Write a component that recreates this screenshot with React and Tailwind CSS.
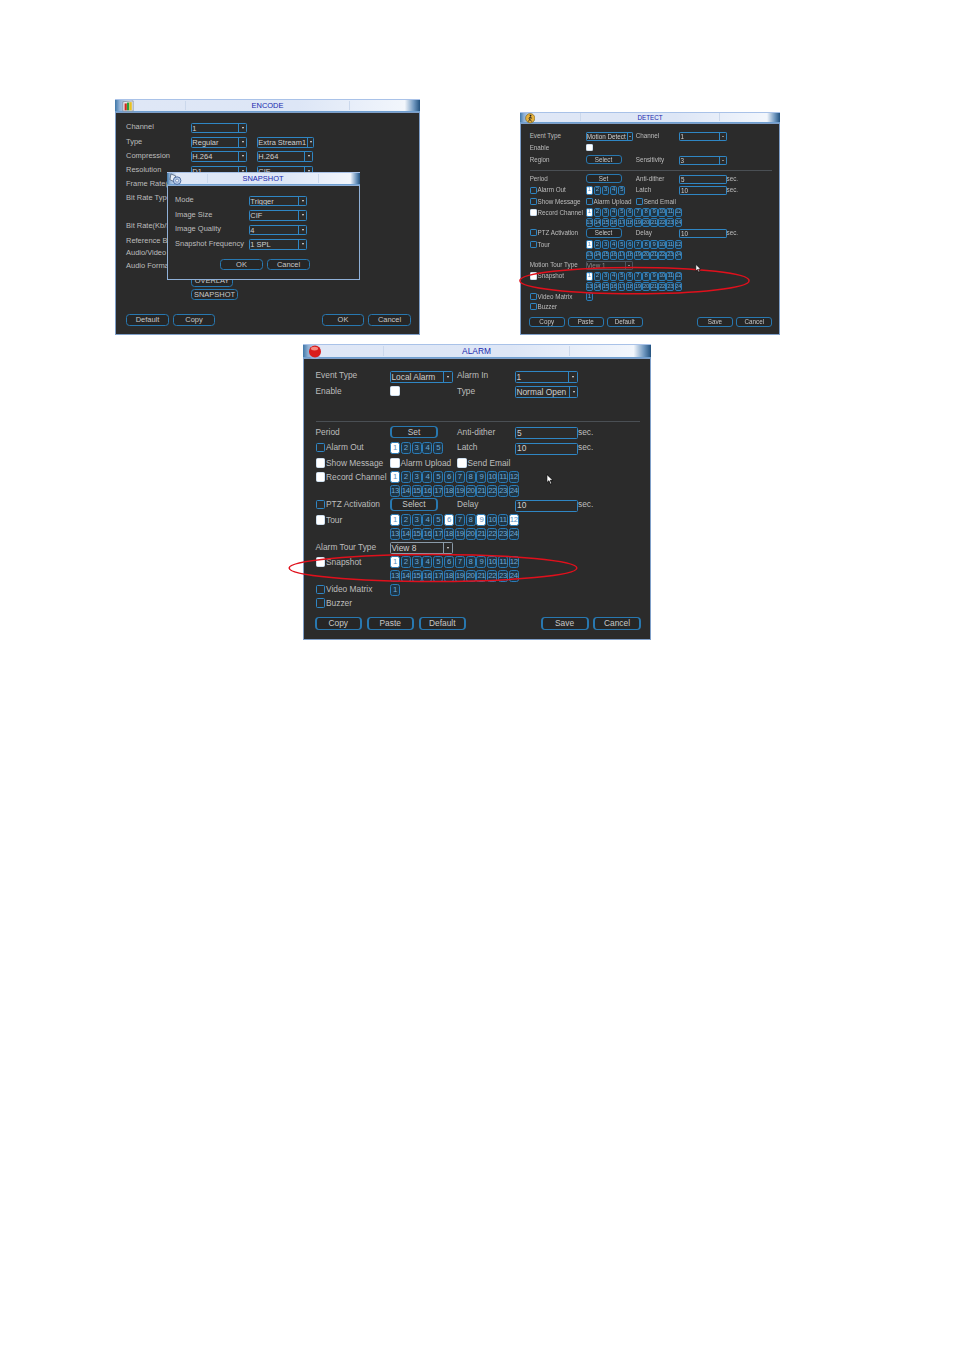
import React from "react";

const range = (a, b) => Array.from({ length: b - a + 1 }, (_, i) => a + i);

function Select({ value, w, arrow = "w-[0.9em]", dim = false, pale = false }) {
  const border = dim ? "border-[#4b5560]" : pale ? "border-[#8a9aa8]" : "border-[#2f86c4]";
  const text = dim ? "text-[#8a8a8a]" : "text-[#cfcfcf]";
  return (
    <div className={`mt-[0.2em] flex h-[1.2em] shrink-0 items-stretch rounded-[0.15em] border-[0.13em] ${border} ${w}`}>
      <span className={`flex-1 overflow-hidden whitespace-nowrap pl-[0.05em] text-[0.84em] leading-[1.25] ${text}`}>{value}</span>
      <span className={`flex shrink-0 items-center justify-center border-l-[0.1em] ${border} ${arrow}`}>
        <span className="h-0 w-0 border-x-[0.18em] border-t-[0.25em] border-x-transparent border-t-[#e8e8e8]" />
      </span>
    </div>
  );
}

function Input({ value, w }) {
  return (
    <div className={`mt-[0.2em] flex h-[1.2em] shrink-0 items-center rounded-[0.15em] border-[0.13em] border-[#2f86c4] pl-[0.1em] ${w}`}>
      <span className="text-[0.84em] text-[#cfcfcf]">{value}</span>
    </div>
  );
}

function Button({ label, w }) {
  return (
    <div className={`flex h-[1.25em] shrink-0 items-center justify-center rounded-[0.4em] border-[0.14em] border-x-[0.2em] border-[#2878b0] bg-[#262626] ${w}`}>
      <span className="text-[0.84em] text-[#c8c8c8]">{label}</span>
    </div>
  );
}

function Check({ on }) {
  return (
    <span
      className={`mr-[0.1em] h-[0.95em] w-[0.95em] shrink-0 rounded-[0.15em] border-[0.1em] ${on ? "border-[#cfe0f0] bg-white" : "border-[#2f86c4] bg-[#2b2b2b]"}`}
    />
  );
}

function Label({ children }) {
  return <span className="shrink-0 whitespace-nowrap text-[0.84em] text-[#bdbdbd]">{children}</span>;
}

function CheckLabel({ on, label }) {
  return (
    <div className="flex shrink-0 items-center">
      <Check on={on} />
      <Label>{label}</Label>
    </div>
  );
}

function Nums({ from, to, on = [] }) {
  return (
    <div className="flex gap-[0.08em]">
      {range(from, to).map((n) => (
        <span
          key={n}
          className={`flex h-[1.2em] w-[1em] items-center justify-center overflow-hidden rounded-[0.25em] border-[0.13em] border-[#2a7cb8] ${on.includes(n) ? "bg-white" : "bg-[#1f3544]"}`}
        >
          <span className={`text-[0.78em] leading-none tracking-[-0.05em] ${on.includes(n) ? "text-[#5b93c4]" : "text-[#6ea6d2]"}`}>{n}</span>
        </span>
      ))}
    </div>
  );
}

function TitleBar({ title, icon, h, panel }) {
  return (
    <div className={`relative flex items-center border-b border-t border-b-[#6f9fd0] border-t-[#a9c2e8] bg-[linear-gradient(90deg,#3f77a8_0%,#8fb0d4_1.5%,#dfe7f6_5%,#dde6f6_60%,#f2f6fc_95%,#6f97bf_98%,#23527f_100%)] ${h}`}>
      <div className={`flex h-[90%] items-center justify-center border-x border-[#cbd8ec] ${panel}`}>
        <span className="text-[0.84em] text-[#1a28ad]">{title}</span>
      </div>
      {icon}
    </div>
  );
}

function Ball() {
  return (
    <svg viewBox="0 0 14 14" className="absolute left-[0.5em] top-0 h-[1.4em] w-[1.4em]">
      <ellipse cx="7" cy="12" rx="4.5" ry="2" fill="#8fb0d8" />
      <circle cx="7" cy="6.4" r="6" fill="#d81c1c" />
      <ellipse cx="6.5" cy="3.6" rx="3.6" ry="1.9" fill="#f58a80" />
    </svg>
  );
}

function Walker() {
  return (
    <svg viewBox="0 0 14 14" className="absolute left-[0.6em] top-[0.05em] h-[1.4em] w-[1.4em]">
      <circle cx="7" cy="7" r="6.2" fill="#e8b23c" stroke="#6d5a20" strokeWidth="0.8" />
      <circle cx="7.4" cy="3.4" r="1.2" fill="#222" />
      <path d="M7.2 5 L6.4 8.2 L4.6 11.4 M6.4 8.2 L8.8 11.4 M7 5.6 L9.4 7.2 M7 5.6 L4.8 7.2" stroke="#222" strokeWidth="1.1" fill="none" />
    </svg>
  );
}

function Bars() {
  return (
    <svg viewBox="0 0 14 14" className="absolute left-[0.75em] top-0 h-[1.35em] w-[1.35em]">
      <path d="M1 2 L13 1 L13 13 L1 13 Z" fill="#e4e9ef" stroke="#6b7785" strokeWidth="0.7" />
      <rect x="3" y="4" width="2.6" height="8" fill="#d02a1c" />
      <rect x="5.8" y="3" width="2.6" height="9" fill="#2aa03a" />
      <rect x="8.6" y="2.5" width="2.8" height="9.5" fill="#e8c020" />
    </svg>
  );
}

function Camera() {
  return (
    <svg viewBox="0 0 14 14" className="absolute left-[0.2em] top-0 h-[1.5em] w-[1.5em]">
      <path d="M2 1 L7 3 L5 9 L1 7 Z" fill="#e8eef6" stroke="#4a5a74" strokeWidth="0.8" />
      <circle cx="8.5" cy="8" r="4" fill="#b9cdea" stroke="#3e5f96" strokeWidth="0.9" />
      <circle cx="8.5" cy="8" r="1.6" fill="#f4f7fc" stroke="#3e5f96" strokeWidth="0.6" />
    </svg>
  );
}

function Cursor({ className }) {
  return (
    <svg viewBox="0 0 10 14" className={`absolute ${className}`}>
      <path d="M1 0.5 L1 11 L3.6 8.6 L5.4 13 L7.2 12.2 L5.4 8 L8.8 8 Z" fill="#fff" stroke="#000" strokeWidth="1" />
    </svg>
  );
}

function Ring({ className }) {
  return (
    <svg className={`pointer-events-none absolute ${className}`}>
      <ellipse cx="50%" cy="50%" rx="49.6%" ry="45%" fill="none" stroke="#e0101c" strokeWidth="1.5" />
    </svg>
  );
}

const Row = ({ mt = "", children }) => <div className={`flex h-[1.3em] items-center ${mt}`}>{children}</div>;
const Col1 = ({ children }) => <div className="flex w-[7.45em] shrink-0 items-center">{children}</div>;
const Col2 = ({ children }) => <div className="flex w-[6.7em] shrink-0 items-center">{children}</div>;
const Col3 = ({ children }) => <div className="flex w-[5.8em] shrink-0 items-center">{children}</div>;

function EventWindow({ size, title, icon, first, top, third, tour, tourType, alarmCheck, tourOn, ring, cursor }) {
  return (
    <div className={`relative flex shrink-0 flex-col ${size}`}>
      <TitleBar title={title} icon={icon} h="h-[1.4em]" panel="ml-[8em] w-[18.7em]" />
      <div className="flex-1 border border-[#7f9fc8] bg-[#2b2b2b] pl-[1.15em] pr-[1em] pt-[1em]">
        <Row>
          <Col1><Label>Event Type</Label></Col1>
          <Col2>{first.select}</Col2>
          <Col3><Label>{first.label}</Label></Col3>
          <Select value="1" w="w-[6.3em]" />
        </Row>
        <Row mt="mt-[0.25em]">
          <Col1><Label>Enable</Label></Col1>
          <Col2><Check on /></Col2>
          {top}
        </Row>
        <Row mt="mt-[0.3em]">{third}</Row>
        <div className="mb-[0.35em] mt-[0.75em] h-px bg-[#4a4f54]" />
        <Row>
          <Col1><Label>Period</Label></Col1>
          <Col2><Button label="Set" w="w-[4.8em]" /></Col2>
          <Col3><Label>Anti-dither</Label></Col3>
          <Input value="5" w="w-[6.3em]" />
          <Label>sec.</Label>
        </Row>
        <Row mt="mt-[0.25em]">
          <Col1><CheckLabel label="Alarm Out" /></Col1>
          <Col2><Nums from={1} to={5} on={[1]} /></Col2>
          <Col3><Label>Latch</Label></Col3>
          <Input value="10" w="w-[6.3em]" />
          <Label>sec.</Label>
        </Row>
        <Row mt="mt-[0.25em]">
          <Col1><CheckLabel on={alarmCheck} label="Show Message" /></Col1>
          <Col2><CheckLabel on={alarmCheck} label="Alarm Upload" /></Col2>
          <CheckLabel on={alarmCheck} label="Send Email" />
        </Row>
        <Row mt="mt-[0.1em]">
          <Col1><CheckLabel on label="Record Channel" /></Col1>
          <Nums from={1} to={12} on={[1]} />
        </Row>
        <Row mt="mt-[0.1em]">
          <Col1 />
          <Nums from={13} to={24} />
        </Row>
        <Row mt="mt-[0.05em]">
          <Col1><CheckLabel label="PTZ Activation" /></Col1>
          <Col2><Button label="Select" w="w-[4.8em]" /></Col2>
          <Col3><Label>Delay</Label></Col3>
          <Input value="10" w="w-[6.3em]" />
          <Label>sec.</Label>
        </Row>
        <Row mt="mt-[0.25em]">
          <Col1><CheckLabel on={tour} label="Tour" /></Col1>
          <Nums from={1} to={12} on={tourOn} />
        </Row>
        <Row mt="mt-[0.1em]">
          <Col1 />
          <Nums from={13} to={24} />
        </Row>
        <Row>
          <Col1><Label>{tourType.label}</Label></Col1>
          {tourType.select}
        </Row>
        <Row mt="mt-[0.2em]">
          <Col1><CheckLabel on label="Snapshot" /></Col1>
          <Nums from={1} to={12} on={[1]} />
        </Row>
        <Row mt="mt-[0.1em]">
          <Col1 />
          <Nums from={13} to={24} />
        </Row>
        <Row mt="mt-[0.05em]">
          <Col1><CheckLabel label="Video Matrix" /></Col1>
          <Nums from={1} to={1} />
        </Row>
        <Row mt="mt-[0.05em]">
          <Col1><CheckLabel label="Buzzer" /></Col1>
        </Row>
        <div className="-ml-[0.1em] -mr-[0.1em] mt-[0.75em] flex h-[1.3em] items-center gap-[0.45em]">
          <Button label="Copy" w="w-[4.75em]" />
          <Button label="Paste" w="w-[4.75em]" />
          <Button label="Default" w="w-[4.75em]" />
          <div className="flex-1" />
          <Button label="Save" w="w-[4.8em]" />
          <Button label="Cancel" w="w-[4.8em]" />
        </div>
      </div>
      <Ring className={ring} />
      <Cursor className={cursor} />
    </div>
  );
}

function Snapshot() {
  const rows = [
    ["Mode", "Trigger", ""],
    ["Image Size", "CIF", "mt-[2.5px]"],
    ["Image Quality", "4", "mt-[2.5px]"],
    ["Snapshot Frequency", "1 SPL", "mt-[2.5px]"],
  ];
  return (
    <div className="absolute left-[52px] top-[73px] flex h-[108px] w-[193px] flex-col">
      <TitleBar title="SNAPSHOT" icon={<Camera />} h="h-[13px]" panel="ml-[40px] w-[112px]" />
      <div className="flex-1 border border-[#8fb0d8] bg-[#2b2b2b] pl-[7px] pt-[8px]">
        {rows.map(([l, v, mt]) => (
          <div key={l} className={`flex h-[12px] items-center ${mt}`}>
            <div className="flex w-[74px] shrink-0"><Label>{l}</Label></div>
            <Select value={v} w="w-[58px]" />
          </div>
        ))}
        <div className="ml-[45px] mt-[9px] flex h-[12px] items-center gap-[4px]">
          <Button label="OK" w="w-[43px]" />
          <Button label="Cancel" w="w-[43px]" />
        </div>
      </div>
    </div>
  );
}

function EncodeRow({ label, mt = "", children }) {
  return (
    <div className={`flex h-[12px] items-center ${mt}`}>
      <div className="flex w-[65px] shrink-0"><Label>{label}</Label></div>
      {children}
    </div>
  );
}

function Encode() {
  const A = ({ v }) => <Select value={v} w="w-[56px]" />;
  const gap = <div className="w-[10px] shrink-0" />;
  return (
    <div className="relative flex h-[236px] w-[305px] shrink-0 flex-col text-[8.9px]">
      <TitleBar title="ENCODE" icon={<Bars />} h="h-[13px]" panel="ml-[70px] w-[165px]" />
      <div className="flex-1 border border-[#7f9fc8] bg-[#2b2b2b] pl-[10px] pr-[8px] pt-[8px]">
        <EncodeRow label="Channel"><A v="1" /></EncodeRow>
        <EncodeRow label="Type" mt="mt-[2.5px]"><A v="Regular" />{gap}<Select value="Extra Stream1" w="w-[57px]" arrow="w-[0.65em]" /></EncodeRow>
        <EncodeRow label="Compression" mt="mt-[2px]"><A v="H.264" />{gap}<A v="H.264" /></EncodeRow>
        <EncodeRow label="Resolution" mt="mt-[2.5px]"><A v="D1" />{gap}<A v="CIF" /></EncodeRow>
        <EncodeRow label="Frame Rate(FPS)" mt="mt-[2px]" />
        <EncodeRow label="Bit Rate Type" mt="mt-[2px]" />
        <EncodeRow label="Bit Rate(Kb/S)" mt="mt-[16px]" />
        <EncodeRow label="Reference Bit Rate" mt="mt-[2.5px]" />
        <EncodeRow label="Audio/Video" mt="mt-[0.5px]" />
        <EncodeRow label="Audio Format" mt="mt-[1px]" />
        <EncodeRow label="" mt="mt-[3px]"><Button label="OVERLAY" w="w-[42px]" /></EncodeRow>
        <EncodeRow label="" mt="mt-[1.5px]"><Button label="SNAPSHOT" w="w-[47px]" /></EncodeRow>
        <div className="mt-[13.5px] flex h-[12px] items-center">
          <Button label="Default" w="w-[43px]" />
          <div className="w-[4px]" />
          <Button label="Copy" w="w-[42px]" />
          <div className="flex-1" />
          <Button label="OK" w="w-[42px]" />
          <div className="w-[4px]" />
          <Button label="Cancel" w="w-[43px]" />
        </div>
      </div>
      <Snapshot />
    </div>
  );
}

export default function App() {
  return (
    <div className="h-[1350px] w-[954px] bg-white pt-[99px] font-['Liberation_Sans',Arial,sans-serif]">
      <div className="blur-[0.4px]">
        <div className="flex items-start pl-[115px]">
          <Encode />
          <div className="ml-[100px] mt-[13px]">
            <EventWindow
              size="h-[223px] w-[260px] text-[7.5px]"
              title="DETECT"
              icon={<Walker />}
              first={{ select: <Select value="Motion Detect" w="w-[6.3em]" arrow="w-[0.7em]" />, label: "Channel" }}
              top={null}
              third={
                <>
                  <Col1><Label>Region</Label></Col1>
                  <Col2><Button label="Select" w="w-[4.8em]" /></Col2>
                  <Col3><Label>Sensitivity</Label></Col3>
                  <Select value="3" w="w-[6.3em]" />
                </>
              }
              tour={false}
              tourOn={[1]}
              tourType={{ label: "Motion Tour Type", select: <Select value="View 1" w="w-[6.3em]" dim /> }}
              alarmCheck={false}
              ring="left-[-0.13em] top-[20.5em] h-[3.9em] w-[30.8em]"
              cursor="left-[23.3em] top-[20.2em] h-[1.2em] w-[0.9em]"
            />
          </div>
        </div>
        <div className="ml-[303px] mt-[9px]">
          <EventWindow
            size="h-[296px] w-[348px] text-[10px]"
            title="ALARM"
            icon={<Ball />}
            first={{ select: <Select value="Local Alarm" w="w-[6.3em]" />, label: "Alarm In" }}
            top={
              <>
                <Col3><Label>Type</Label></Col3>
                <Select value="Normal Open" w="w-[6.3em]" arrow="w-[0.8em]" />
              </>
            }
            third={null}
            tour
            tourOn={[1, 6, 9, 12]}
            tourType={{ label: "Alarm Tour Type", select: <Select value="View 8" w="w-[6.3em]" pale /> }}
            alarmCheck
            ring="left-[-1.5em] top-[20.9em] h-[3em] w-[29em]"
            cursor="left-[24.3em] top-[13em] h-[1.1em] w-[0.8em]"
          />
        </div>
      </div>
    </div>
  );
}
